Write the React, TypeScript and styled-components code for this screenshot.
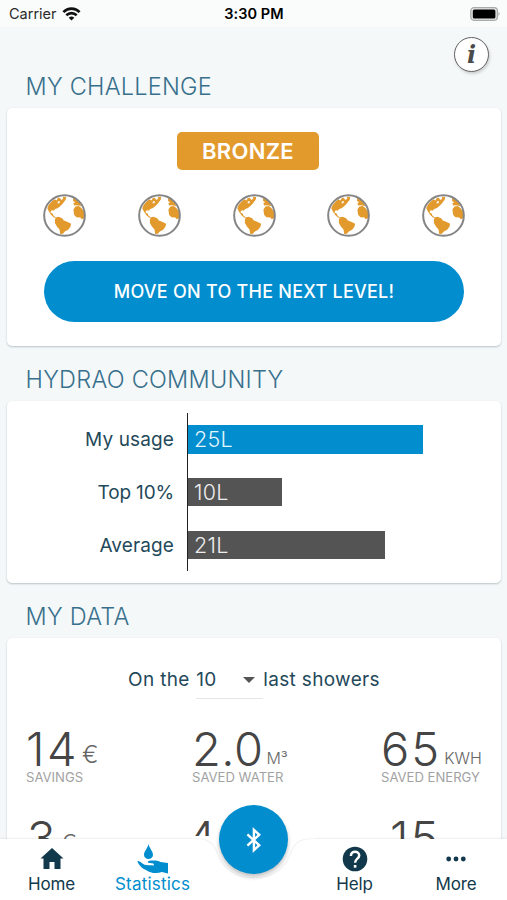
import React from "react";
import styled, { createGlobalStyle } from "styled-components";

const BLUE = "#018dce";
const NAVY = "#12394b";
const AMBER = "#e39a2d";

const GlobalStyle = createGlobalStyle`
  *, *::before, *::after { box-sizing: border-box; }
  body {
    margin: 0;
    font-family: Inter, "Liberation Sans", sans-serif;
    color: #24495a;
    background: #f4f8f9;
  }
  svg { display: block; }
`;

const Screen = styled.div`
  display: flex;
  flex-direction: column;
  width: 507px;
  height: 900px;
  overflow: hidden;
`;

const StatusBar = styled.header`
  flex: none;
  display: grid;
  grid-template-columns: 1fr auto 1fr;
  align-items: center;
  height: 27px;
  padding: 0 6px 0 9px;
  background: #fafbfb;
  color: #000;
  font-size: 14.5px;
  line-height: 26px;
`;

const Carrier = styled.div`
  display: flex;
  align-items: center;
  gap: 5px;
  color: #2a2a2a;
`;

const Clock = styled.div`
  margin-right: 2px;
  font-weight: 600;
  letter-spacing: 0.05px;
`;

const BatterySlot = styled.div`
  display: flex;
  justify-content: flex-end;
`;

const Content = styled.main`
  flex: 1;
  min-height: 0;
  overflow: hidden;
  padding: 0 6px 0 7px;
`;

const InfoRow = styled.div`
  display: flex;
  justify-content: flex-end;
  height: 36px;
  padding: 10px 12px 0 0;
`;

const InfoButton = styled.button`
  flex: none;
  display: flex;
  align-items: center;
  justify-content: center;
  width: 35px;
  height: 35px;
  padding: 0;
  border: 1.5px solid #626262;
  border-radius: 50%;
  background: #fff;
  box-shadow: 1px 2px 3px rgba(0, 0, 0, 0.16);
  color: #4a4a4a;
  font: italic bold 24px/30px "DejaVu Serif", serif;
`;

const SectionTitle = styled.h2<{ $height: number }>`
  display: flex;
  align-items: flex-end;
  height: ${(p) => p.$height}px;
  margin: 0;
  padding: 0 18.6px 6px;
  color: #38708c;
  font-size: 23.5px;
  font-weight: 300;
  line-height: 30px;
  letter-spacing: 0.24px;
`;

const Card = styled.section<{ $height: number }>`
  height: ${(p) => p.$height}px;
  border-radius: 5px;
  background: #fff;
  box-shadow: 0 1px 2px rgba(40, 60, 70, 0.28);
`;

const ChallengeCard = styled(Card)`
  display: flex;
  flex-direction: column;
  align-items: center;
  padding: 24px 36px 0;
`;

const LevelBadge = styled.div`
  width: 142px;
  height: 38px;
  margin-right: 12px;
  border-radius: 5px;
  background: ${AMBER};
  color: #fff;
  font-size: 22px;
  font-weight: 600;
  line-height: 38px;
  text-align: center;
  letter-spacing: 0.3px;
`;

const Globes = styled.div`
  display: flex;
  justify-content: space-between;
  align-self: stretch;
  margin: 24px 0 24px;
`;

const NextButton = styled.button`
  align-self: stretch;
  height: 61px;
  margin: 0 1px;
  padding: 0;
  border: 0;
  border-radius: 31px;
  background: ${BLUE};
  color: #fff;
  font: 500 18px/61px Inter, sans-serif;
  letter-spacing: 0.25px;
`;

const ChartCard = styled(Card)`
  padding: 12px 0 0;
`;

const ChartRows = styled.div`
  display: grid;
  grid-template-columns: 180px 1fr;
  grid-auto-rows: 52.8px;
`;

const BarLabel = styled.div<{ $tight?: boolean }>`
  display: flex;
  align-items: center;
  justify-content: flex-end;
  padding: 1px 13px 0 0;
  font-size: 19px;
  letter-spacing: ${(p) => (p.$tight ? -0.15 : 0.12)}px;
`;

const BarTrack = styled.div`
  display: flex;
  align-items: center;
  border-left: 1.5px solid #222;
`;

const Bar = styled.div<{ $own?: boolean }>`
  height: 28.4px;
  padding-left: 6px;
  background: ${(p) => (p.$own ? BLUE : "#545454")};
  color: ${(p) => (p.$own ? "#e3f5fd" : "#ededed")};
  font-size: 21.5px;
  font-weight: 300;
  line-height: 29px;
  letter-spacing: 0.3px;
`;

const DataCard = styled(Card)`
  padding: 23px 19px 0;
`;

const Period = styled.div`
  display: flex;
  justify-content: center;
  height: 38px;
  font-size: 19px;
  line-height: 37px;
  letter-spacing: 0.34px;
`;

const PeriodSelect = styled.div`
  display: flex;
  align-items: center;
  justify-content: space-between;
  width: 67px;
  margin: 0 0 0 6.5px;
  padding-right: 8px;
  border-bottom: 1.5px solid #e5e8ea;
`;

const Metrics = styled.div<{ $gap: number }>`
  display: flex;
  justify-content: space-between;
  margin-top: ${(p) => p.$gap}px;
`;

const Metric = styled.div<{ $width: number; $shift?: number }>`
  width: ${(p) => p.$width}px;
  margin-left: ${(p) => p.$shift ?? 0}px;
  white-space: nowrap;
`;

const Reading = styled.div<{ $indent?: number }>`
  height: 43px;
  padding-left: ${(p) => p.$indent ?? 0}px;
  color: #454545;
  line-height: 46px;
`;

const Value = styled.span<{ $spacing?: number }>`
  font-size: 47px;
  font-weight: 300;
  letter-spacing: ${(p) => p.$spacing ?? 0}px;
`;

const Unit = styled.span<{ $large?: boolean }>`
  margin-left: 3px;
  color: #666;
  font-size: ${(p) => (p.$large ? 24.5 : 16)}px;
  font-weight: 300;
  line-height: 20px;
  vertical-align: ${(p) => (p.$large ? 3 : 2)}px;
`;

const Caption = styled.div`
  color: #a2a2a2;
  font-size: 13.1px;
  line-height: 16px;
`;

const TabBar = styled.nav`
  flex: none;
  position: relative;
  display: grid;
  grid-template-columns: 101px 101px 101px 101px 102px;
  height: 61px;
  padding-left: 1px;
  background: #fff;
  box-shadow: 0 -1px 2px rgba(0, 0, 0, 0.07);
`;

const Tab = styled.a<{ $active?: boolean }>`
  display: flex;
  flex-direction: column;
  align-items: center;
  justify-content: space-between;
  height: 55px;
  padding-top: 4px;
  color: ${(p) => (p.$active ? BLUE : NAVY)};
`;

const TabIcon = styled.span`
  display: flex;
  align-items: center;
  justify-content: center;
  height: 31px;
`;

const TabLabel = styled.span<{ $wide?: boolean }>`
  font-size: 17px;
  line-height: 20px;
  letter-spacing: ${(p) => (p.$wide ? 0.2 : -0.1)}px;
`;

const Notch = styled.div`
  position: absolute;
  left: 192px;
  top: -10px;
`;

const ConnectButton = styled.button`
  position: absolute;
  left: 219px;
  top: -34px;
  display: flex;
  align-items: center;
  justify-content: center;
  width: 69px;
  height: 69px;
  padding: 0;
  border: 0;
  border-radius: 50%;
  background: ${BLUE};
  box-shadow: 0 3px 4px rgba(0, 0, 0, 0.24);
`;

const Globe = () => (
  <svg width="43" height="43" viewBox="0 0 130 130">
    <g fill={AMBER}>
      <path d="M44 13 L51 11 L55 18 L61 14 L60 8 L70 9 L69 17 L60 29 L51 38 L44 43 L37 45 L32 51 L28 49 L24 51 L23 57 L29 59 L32 66 L39 71 L37 73 L27 66 L18 54 L13 43 L17 33 L26 23 L35 16 L41 20 Z" />
      <path d="M40 70 L47 69 L58 73 L63 80 L73 84 L85 90 L83 99 L76 108 L66 113 L60 120 L52 121 L50 107 L42 98 L36 88 L36 76 Z" />
      <path d="M92 47 L98 38 L108 36 L116 42 L124 53 L124 73 L117 76 L113 71 L101 70 L94 63 Z" />
      <path d="M91 11 L103 18 L112 28 L116 37 L108 35 L100 34 L94 35 L92 28 L97 25 L91 21 Z" />
    </g>
    <path d="M45 23 L51 21 L50 28 L44 28 Z" fill="#fff" />
    <circle cx="65" cy="65" r="61.5" fill="none" stroke="#858585" strokeWidth="6" />
  </svg>
);

const WifiIcon = () => (
  <svg width="19" height="14" viewBox="0 0 18 14">
    <g fill="none" stroke="#111" strokeWidth="2.6">
      <path d="M.9 5.1 C5.4 .4 12.6 .4 17.1 5.1" />
      <path d="M3.8 8.3 C6.8 5.4 11.2 5.4 14.2 8.3" />
    </g>
    <path d="M6.2 10.7 Q9 8.2 11.8 10.7 L9 13.5 Z" fill="#111" />
  </svg>
);

const BatteryIcon = () => (
  <svg width="31" height="14" viewBox="0 0 31 14">
    <rect x=".8" y=".7" width="26.6" height="12.6" rx="3.2" fill="#e6e6e6" stroke="#aaa" strokeWidth="1.3" />
    <rect x="2.8" y="2.4" width="22.6" height="9.2" rx="1.5" fill="#000" />
    <path d="M28.5 4.8 Q30.7 7 28.5 9.2 Z" fill="#aaa" />
  </svg>
);

const Caret = () => (
  <svg width="12" height="6" viewBox="0 0 12 6">
    <path d="M0 0 H12 L6 6 Z" fill="#555" />
  </svg>
);

const HomeIcon = () => (
  <svg width="24" height="21" viewBox="0 0 24 21">
    <path d="M12 0 L23.5 10.5 H20.5 V21 H14.5 V14 H9.5 V21 H3.5 V10.5 H.5 Z" fill={NAVY} />
  </svg>
);

const WaterHandIcon = () => (
  <svg width="32" height="30" viewBox="0 0 32 30">
    <g fill={BLUE}>
      <path d="M11.5 0 C12.3 4 16 7.5 16 10.8 A4.5 4.3 0 0 1 7 10.8 C7 7.5 10.7 4 11.5 0 Z" />
      <path d="M.4 17.2 C2.6 16.4 5 19.8 7.6 20.8 C10 21.5 13 20.7 17 21.6 L16.5 19.6 L11 18.7 C10.5 17.3 12 16.6 14 16.6 C18.5 16.5 21 16.7 23.5 18 L31 19 V29.5 L25 28 C19.5 30 13 29 9.5 26.2 C5 24.6 1.7 21 .4 17.2 Z" />
    </g>
  </svg>
);

const HelpIcon = () => (
  <svg width="26" height="26" viewBox="0 0 26 26">
    <circle cx="13" cy="13" r="12.3" fill={NAVY} />
    <path d="M8.9 10 C8.9 4.2 17.2 4.5 17.2 9.5 C17.2 12.7 13.1 12.6 13.1 16.8" fill="none" stroke="#fff" strokeWidth="2.5" />
    <rect x="11.8" y="19" width="2.6" height="2.7" fill="#fff" />
  </svg>
);

const MoreIcon = () => (
  <svg width="20" height="6" viewBox="0 0 20 6">
    <g fill={NAVY}>
      <circle cx="2.7" cy="3" r="2.4" />
      <circle cx="10" cy="3" r="2.4" />
      <circle cx="17.3" cy="3" r="2.4" />
    </g>
  </svg>
);

const BluetoothIcon = () => (
  <svg width="16" height="26" viewBox="0 0 16 26">
    <path d="M1.4 7.4 L13.2 18.2 L7.9 23.2 V2.8 L13.2 7.8 L1.4 18.6" fill="none" stroke="#fff" strokeWidth="2.4" />
  </svg>
);

const usage = [
  { label: "My usage", value: "25L", width: 234.5, own: true },
  { label: "Top 10%", value: "10L", width: 93.5, tight: true },
  { label: "Average", value: "21L", width: 197 },
];

export default function App() {
  return (
    <>
      <GlobalStyle />
      <Screen>
        <StatusBar>
          <Carrier>
            Carrier <WifiIcon />
          </Carrier>
          <Clock>3:30 PM</Clock>
          <BatterySlot>
            <BatteryIcon />
          </BatterySlot>
        </StatusBar>

        <Content>
          <InfoRow>
            <InfoButton aria-label="Information">i</InfoButton>
          </InfoRow>

          <SectionTitle $height={45}>MY CHALLENGE</SectionTitle>
          <ChallengeCard $height={238}>
            <LevelBadge>BRONZE</LevelBadge>
            <Globes>
              {[1, 2, 3, 4, 5].map((n) => (
                <Globe key={n} />
              ))}
            </Globes>
            <NextButton>MOVE ON TO THE NEXT LEVEL!</NextButton>
          </ChallengeCard>

          <SectionTitle $height={55}>HYDRAO COMMUNITY</SectionTitle>
          <ChartCard $height={182}>
            <ChartRows>
              {usage.map((u) => (
                <React.Fragment key={u.label}>
                  <BarLabel $tight={u.tight}>{u.label}</BarLabel>
                  <BarTrack>
                    <Bar $own={u.own} style={{ width: u.width }}>
                      {u.value}
                    </Bar>
                  </BarTrack>
                </React.Fragment>
              ))}
            </ChartRows>
          </ChartCard>

          <SectionTitle $height={55}>MY DATA</SectionTitle>
          <DataCard $height={300}>
            <Period>
              On the
              <PeriodSelect>
                10 <Caret />
              </PeriodSelect>
              last showers
            </Period>
            <Metrics $gap={27}>
              <Metric $width={58}>
                <Reading>
                  <Value $spacing={2.5}>14</Value>
                  <Unit $large>€</Unit>
                </Reading>
                <Caption>SAVINGS</Caption>
              </Metric>
              <Metric $width={92} $shift={11}>
                <Reading>
                  <Value $spacing={0.5}>2.0</Value>
                  <Unit>M³</Unit>
                </Reading>
                <Caption>SAVED WATER</Caption>
              </Metric>
              <Metric $width={101}>
                <Reading>
                  <Value $spacing={2}>65</Value>
                  <Unit>KWH</Unit>
                </Reading>
                <Caption>SAVED ENERGY</Caption>
              </Metric>
            </Metrics>
            <Metrics $gap={30}>
              <Metric $width={58}>
                <Reading $indent={1}>
                  <Value $spacing={2}>3</Value>
                  <Unit $large>€</Unit>
                </Reading>
              </Metric>
              <Metric $width={92}>
                <Reading>
                  <Value>4</Value>
                </Reading>
              </Metric>
              <Metric $width={101}>
                <Reading $indent={9}>
                  <Value $spacing={2}>15</Value>
                </Reading>
              </Metric>
            </Metrics>
          </DataCard>
        </Content>

        <TabBar>
          <Tab>
            <TabIcon>
              <HomeIcon />
            </TabIcon>
            <TabLabel>Home</TabLabel>
          </Tab>
          <Tab $active>
            <TabIcon>
              <WaterHandIcon />
            </TabIcon>
            <TabLabel $wide>Statistics</TabLabel>
          </Tab>
          <span />
          <Tab>
            <TabIcon>
              <HelpIcon />
            </TabIcon>
            <TabLabel>Help</TabLabel>
          </Tab>
          <Tab>
            <TabIcon>
              <MoreIcon />
            </TabIcon>
            <TabLabel>More</TabLabel>
          </Tab>
          <Notch>
            <svg width="124" height="60" viewBox="0 0 124 60">
              <path d="M0 7 H124 V12 H0 Z" fill="#fff" />
              <path d="M0 9.5 C14 9.5 20 12 24 21 C30 40 44 49 62 49 C80 49 94 40 100 21 C104 12 110 9.5 124 9.5" fill="#fff" stroke="#f3f4f5" strokeWidth="1.2" />
            </svg>
          </Notch>
          <ConnectButton aria-label="Connect">
            <BluetoothIcon />
          </ConnectButton>
        </TabBar>
      </Screen>
    </>
  );
}
